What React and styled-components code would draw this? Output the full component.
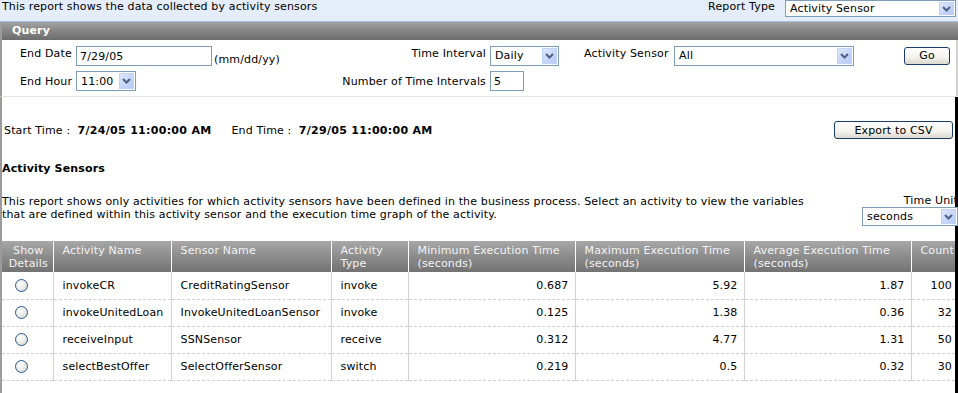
import React from 'react';
import styled, { createGlobalStyle } from 'styled-components';

const GlobalStyle = createGlobalStyle`
  html, body {
    margin: 0;
    padding: 0;
    background: #fff;
    overflow: hidden;
  }
  body {
    font-family: 'DejaVu Sans', Verdana, sans-serif;
    font-size: 11px;
    letter-spacing: 0.15px;
    color: #000;
  }
`;

const Page = styled.div`
  width: 958px;
  height: 393px;
  overflow: hidden;
`;

const TopBar = styled.div`
  height: 21px;
  display: flex;
  align-items: flex-start;
  justify-content: space-between;
  background: #e5edfa;
  border-bottom: 1px solid #a7bde2;
  padding-left: 2px;

  .intro {
    line-height: 14px;
  }

  .report {
    display: flex;
    align-items: flex-start;
    gap: 10px;
    padding-right: 2px;
    line-height: 14px;
  }
`;

const PanelHeader = styled.div`
  height: 18px;
  line-height: 18px;
  padding-left: 10px;
  color: #fff;
  font-weight: bold;
  background: linear-gradient(#a3a3a3, #878787 45%, #6c6c6c);
  border-left: 2px solid #9b9b9b;
`;

const QueryBody = styled.div`
  display: grid;
  grid-template-columns: 74px 256px 158px 94px 90px 180px 1fr;
  grid-template-rows: 21px 20px;
  row-gap: 5px;
  padding: 5px 0 5px 0;
  border-left: 2px solid #9b9b9b;
  border-right: 2px solid #cfcfcf;
  border-bottom: 1px solid #e9e6da;
`;

const Label = styled.div`
  padding-left: ${p => p.$indent || 0}px;
  padding-right: ${p => p.$right ? 4 : 0}px;
  text-align: ${p => p.$right ? 'right' : 'left'};
  align-self: ${p => p.$top ? 'start' : 'center'};
  margin-top: ${p => p.$top ? 2 : 0}px;
  line-height: 13px;
  white-space: nowrap;
`;

const Cell = styled.div`
  display: flex;
  align-items: ${p => p.$bottom ? 'flex-end' : 'center'};
  justify-content: ${p => p.$end ? 'flex-end' : 'flex-start'};
  gap: 2px;
  padding-right: ${p => p.$end ? 6 : 0}px;
`;

const TextInput = styled.div`
  box-sizing: border-box;
  width: ${p => p.$w}px;
  height: ${p => p.$h || 20}px;
  border: 1px solid #7f9db9;
  background: #fff;
  padding-left: 3px;
  display: flex;
  align-items: center;
  line-height: 13px;
`;

const SelectBox = styled.div`
  box-sizing: border-box;
  width: ${p => p.$w}px;
  height: ${p => p.$h || 20}px;
  border: 1px solid #7f9db9;
  background: #fff;
  display: flex;
  align-items: center;
  justify-content: space-between;
  padding: 1px;

  span {
    padding-left: 3px;
    line-height: 13px;
  }
`;

const ArrowBox = styled.div`
  width: 15px;
  height: 100%;
  box-sizing: border-box;
  background: linear-gradient(135deg, #dde7fd, #b5c9f7);
  border: 1px solid #c3d3f7;
  display: flex;
  align-items: center;
  justify-content: center;
`;

const Button = styled.div`
  box-sizing: border-box;
  width: ${p => p.$w}px;
  height: 18px;
  border: 1px solid #1c3a6a;
  border-radius: 3px;
  background: linear-gradient(#ffffff, #f3f2ec 60%, #dcd9cd);
  display: flex;
  align-items: center;
  justify-content: center;
  line-height: 13px;
`;

const Content = styled.div`
  border-left: 2px solid #9b9b9b;
  border-right: 3px solid #000;
  height: 297px;
  display: flex;
  flex-direction: column;
`;

const TimesRow = styled.div`
  display: flex;
  justify-content: space-between;
  align-items: center;
  margin-top: 24px;
  padding: 0 2px 0 2px;
  height: 18px;

  b {
    font-weight: bold;
    letter-spacing: 0.3px;
  }
  .gap {
    display: inline-block;
    width: 20px;
  }
`;

const SectionTitle = styled.div`
  font-weight: bold;
  margin-top: 23px;
  line-height: 13px;
`;

const InfoRow = styled.div`
  display: flex;
  justify-content: space-between;
  align-items: flex-start;
  margin-top: 19px;

  p {
    margin: 0;
    margin-top: 1px;
    width: 815px;
    line-height: 13px;
  }

  .unit {
    display: flex;
    flex-direction: column;
    align-items: flex-end;
    line-height: 13px;
    margin-right: -3px;
  }
`;

const Table = styled.table`
  margin-top: 15px;
  border-collapse: collapse;
  width: 953px;
  table-layout: fixed;

  th {
    height: 31px;
    box-sizing: border-box;
    background: linear-gradient(#a7a7a7, #8c8c8c 50%, #727272);
    color: #f2f2f2;
    font-weight: normal;
    text-align: left;
    vertical-align: top;
    padding: 3px 0 0 9px;
    line-height: 13px;
    border-left: 1px solid #fff;
    white-space: nowrap;
  }
  th:first-child {
    border-left: none;
    text-align: center;
    padding-left: 2px;
  }

  td {
    height: 27px;
    box-sizing: border-box;
    padding: 0 9px;
    border-left: 1px solid #d2d2d2;
    border-bottom: 1px dashed #d0d0d0;
    line-height: 13px;
    white-space: nowrap;
  }
  td:first-child {
    border-left: none;
    padding: 0 0 0 13px;
  }
  td.num {
    text-align: right;
    padding-right: 6px;
  }
  td.count {
    text-align: right;
    padding-right: 3px;
  }
`;

const Radio = styled.span`
  display: inline-block;
  width: 11px;
  height: 11px;
  border-radius: 50%;
  border: 1px solid #2f5a8f;
  background: radial-gradient(circle at 35% 35%, #ffffff, #e8e8e4 55%, #c8c8c0);
  vertical-align: middle;
`;

const Chevron = () => (
  <svg width="9" height="6" viewBox="0 0 9 6">
    <path d="M1 1 L4.5 4.5 L8 1" fill="none" stroke="#4d6185" strokeWidth="2" />
  </svg>
);

const Select = ({ w, h, value }) => (
  <SelectBox $w={w} $h={h}>
    <span>{value}</span>
    <ArrowBox><Chevron /></ArrowBox>
  </SelectBox>
);

const rows = [
  ['invokeCR', 'CreditRatingSensor', 'invoke', '0.687', '5.92', '1.87', '100'],
  ['invokeUnitedLoan', 'InvokeUnitedLoanSensor', 'invoke', '0.125', '1.38', '0.36', '32'],
  ['receiveInput', 'SSNSensor', 'receive', '0.312', '4.77', '1.31', '50'],
  ['selectBestOffer', 'SelectOfferSensor', 'switch', '0.219', '0.5', '0.32', '30'],
];

export default function App() {
  return (
    <Page>
      <GlobalStyle />
      <TopBar>
        <div className="intro">This report shows the data collected by activity sensors</div>
        <div className="report">
          <span>Report Type</span>
          <Select w={171} h={17} value="Activity Sensor" />
        </div>
      </TopBar>

      <PanelHeader>Query</PanelHeader>
      <QueryBody>
        <Label $indent={18} $top>End Date</Label>
        <Cell $bottom>
          <TextInput $w={136}>7/29/05</TextInput>
          <span>(mm/dd/yy)</span>
        </Cell>
        <Label $right $top>Time Interval</Label>
        <Cell><Select w={69} value="Daily" /></Cell>
        <Label $top>Activity Sensor</Label>
        <Cell><Select w={180} value="All" /></Cell>
        <Cell $end><Button $w={46}>Go</Button></Cell>

        <Label $indent={18}>End Hour</Label>
        <Cell><Select w={60} value="11:00" /></Cell>
        <Label $right>Number of Time Intervals</Label>
        <Cell><TextInput $w={34}>5</TextInput></Cell>
        <div />
        <div />
        <div />
      </QueryBody>

      <Content>
        <TimesRow>
          <span>
            Start Time :&nbsp; <b>7/24/05 11:00:00 AM</b>
            <span className="gap" />
            End Time :&nbsp; <b>7/29/05 11:00:00 AM</b>
          </span>
          <Button $w={119}>Export to CSV</Button>
        </TimesRow>

        <SectionTitle>Activity Sensors</SectionTitle>

        <InfoRow>
          <p>
            This report shows only activities for which activity sensors have been defined in the business process. Select an activity to view the variables that are defined within this activity sensor and the execution time graph of the activity.
          </p>
          <div className="unit">
            <span>Time Unit</span>
            <Select w={96} h={19} value="seconds" />
          </div>
        </InfoRow>

        <Table>
          <colgroup>
            <col style={{ width: 51 }} />
            <col style={{ width: 118 }} />
            <col style={{ width: 160 }} />
            <col style={{ width: 77 }} />
            <col style={{ width: 167 }} />
            <col style={{ width: 169 }} />
            <col style={{ width: 167 }} />
            <col />
          </colgroup>
          <thead>
            <tr>
              <th>Show<br />Details</th>
              <th>Activity Name</th>
              <th>Sensor Name</th>
              <th>Activity<br />Type</th>
              <th>Minimum Execution Time<br />(seconds)</th>
              <th>Maximum Execution Time<br />(seconds)</th>
              <th>Average Execution Time<br />(seconds)</th>
              <th>Count</th>
            </tr>
          </thead>
          <tbody>
            {rows.map(r => (
              <tr key={r[0]}>
                <td><Radio /></td>
                <td>{r[0]}</td>
                <td>{r[1]}</td>
                <td>{r[2]}</td>
                <td className="num">{r[3]}</td>
                <td className="num">{r[4]}</td>
                <td className="num">{r[5]}</td>
                <td className="count">{r[6]}</td>
              </tr>
            ))}
          </tbody>
        </Table>
      </Content>
    </Page>
  );
}
